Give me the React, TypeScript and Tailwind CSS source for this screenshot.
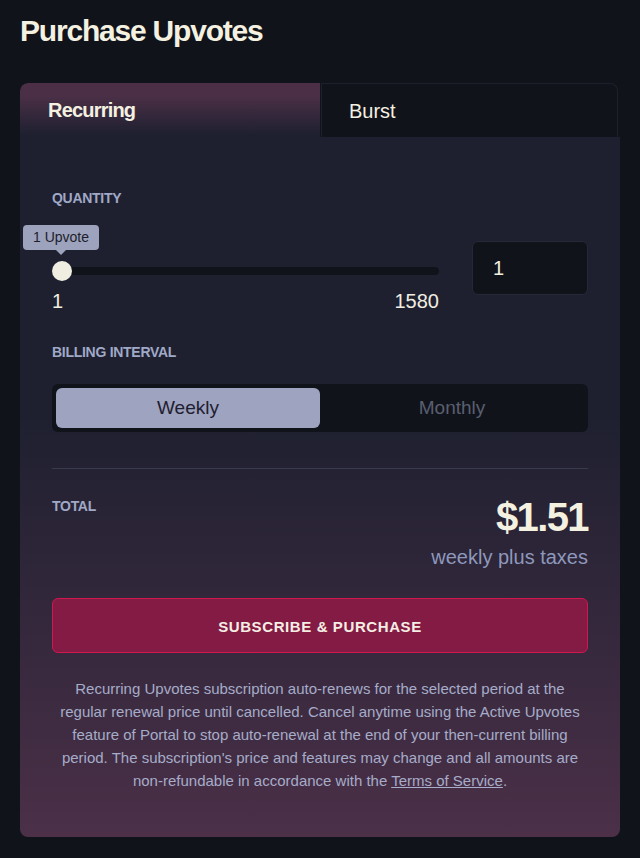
import React from 'react';

const FONT = { fontFamily: '"Liberation Sans", Arial, sans-serif' };

function QuantitySlider() {
  return (
    <div className="relative flex-1 pt-[36px]">
      <div className="absolute left-[-29px] top-0 flex flex-col items-center">
        <div className="h-[25px] rounded-[4px] bg-[#9ea3bd] px-[10px] text-[14px] leading-[25px] text-[#1c1e2c]">1 Upvote</div>
        <div className="h-0 w-0 border-x-[5px] border-t-[5px] border-x-transparent border-t-[#9ea3bd]" />
      </div>
      <div className="relative flex h-[20px] items-center">
        <div className="h-[8px] w-full rounded-full bg-[#11131b]" />
        <div className="absolute left-0 top-0 size-[20px] rounded-full bg-[#f0eee0]" />
      </div>
      <div className="mt-[10px] flex justify-between text-[20px] leading-[20px] text-[#f0eee0]">
        <span>1</span>
        <span>1580</span>
      </div>
    </div>
  );
}

export default function App(): React.ReactElement {
  return (
    <div className="min-h-[858px] bg-[#11131b] px-5 pb-5" style={FONT}>
      <h1 className="pt-[13px] text-[30px] font-bold leading-[36px] tracking-[-0.04em] text-[#f4f1e1]">Purchase Upvotes</h1>

      <div className="mt-[34px] overflow-hidden rounded-[8px]">
        <div className="grid h-[54px] grid-cols-2">
          <div className="flex items-center rounded-tl-[8px] bg-[linear-gradient(to_bottom,#4a2f46_25%,#1e2030_95%)] pl-[28px] text-[20px] font-bold tracking-[-0.04em] text-[#f4f1e1]">
            Recurring
          </div>
          <div className="ml-px mr-[2px] flex items-center rounded-tr-[8px] border-x border-t border-[#1d1f2c] bg-[#11131b] pl-[27px] text-[20px] text-[#f4f1e1]">
            Burst
          </div>
        </div>

        <div className="bg-[linear-gradient(to_bottom,#1e2030_40%,#4b3048)] px-8 pb-[45px] pt-[51px]">
          <div className="text-[14px] font-bold leading-[20px] tracking-[-0.02em] text-[#a0a9c7]">QUANTITY</div>
          <div className="mt-[17px] flex items-start gap-[33px]">
            <QuantitySlider />
            <div className="mt-[16px] flex h-[54px] w-[116px] items-center rounded-[6px] border border-[#262838] bg-[#11131b] pl-5 text-[20px] text-[#f0eee0]">
              1
            </div>
          </div>

          <div className="mt-[31px] text-[14px] font-bold leading-[20px] tracking-[-0.02em] text-[#a0a9c7]">BILLING INTERVAL</div>
          <div className="mt-[22px] grid h-[48px] grid-cols-2 rounded-[6px] bg-[#11131b] p-1">
            <div className="flex items-center justify-center rounded-[6px] bg-[#9ea3bf] text-[19px] text-[#1e2030]">Weekly</div>
            <div className="flex items-center justify-center text-[19px] text-[#5a5f70]">Monthly</div>
          </div>

          <div className="mt-[36px] h-px bg-[#383a4d]" />

          <div className="mt-[24px] flex items-start justify-between">
            <div className="pt-[3px] text-[14px] font-bold leading-[20px] tracking-[-0.02em] text-[#a0a9c7]">TOTAL</div>
            <div className="text-right">
              <div className="text-[40px] font-bold leading-[48px] tracking-[-0.04em] text-[#f4f1e1]">$1.51</div>
              <div className="mt-1 text-[20px] leading-[24px] text-[#8e98bc]">weekly plus taxes</div>
            </div>
          </div>

          <button className="mt-[29px] flex h-[55px] w-full items-center justify-center rounded-[6px] border border-[#d0174e] bg-[#831b44] pt-[3px] text-[15px] font-bold tracking-[0.04em] text-[#f5eee4]">
            SUBSCRIBE &amp; PURCHASE
          </button>

          <p className="mt-[24px] text-center text-[15px] leading-[23px] text-[#a6acc9]">
            Recurring Upvotes subscription auto-renews for the selected period at the regular renewal price until
            cancelled. Cancel anytime using the Active Upvotes feature of Portal to stop auto-renewal at the end of your
            then-current billing period. The subscription's price and features may change and all amounts are
            non-refundable in accordance with the <a className="underline">Terms of Service</a>.
          </p>
        </div>
      </div>
    </div>
  );
}
